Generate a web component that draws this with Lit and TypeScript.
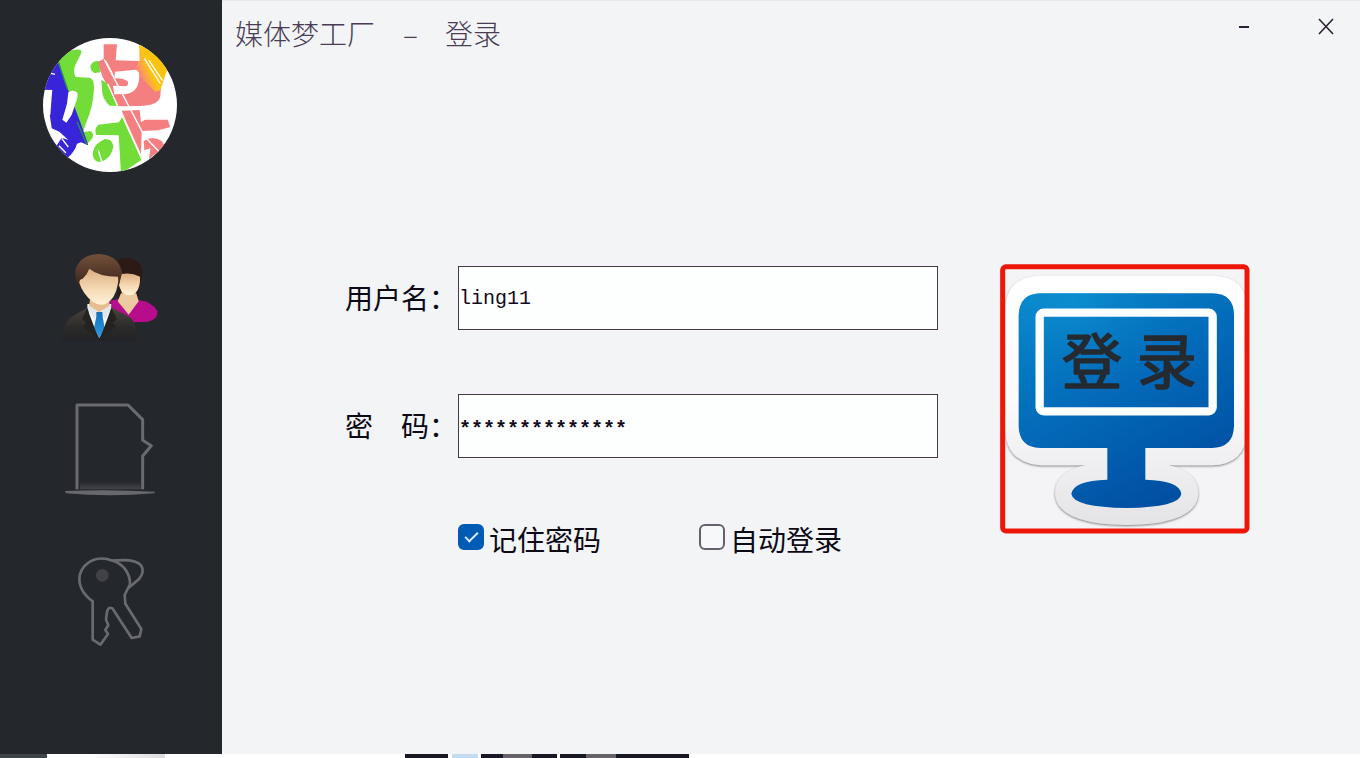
import { LitElement, html, css } from "lit";
import { customElement, state } from "lit/decorators.js";

@customElement("login-sidebar")
class LoginSidebar extends LitElement {
  static styles = css`
    :host {
      display: flex;
      flex-direction: column;
      align-items: center;
      gap: 68px;
      box-sizing: border-box;
      padding: 38px 3px 0 0;
      background: #24272c;
    }
    svg { display: block; }
    .avatar { width: 134px; height: 134px; }
    .nav { display: flex; flex-direction: column; gap: 30px; }
    .item {
      padding: 0;
      border: 0;
      background: none;
      cursor: pointer;
    }
    .icon { width: 120px; height: 120px; }
  `;

  render() {
    return html`
      <svg class="avatar" viewBox="36 39 402 402" role="img" aria-label="媒体梦工厂">
        <defs>
          <clipPath id="disc"><circle cx="237" cy="240" r="201" /></clipPath>
          <linearGradient id="sun" x1="1" y1="0" x2="0.1" y2="0.6">
            <stop offset="0" stop-color="#f6c400" />
            <stop offset="0.7" stop-color="#fdc414" />
            <stop offset="1" stop-color="#f88878" />
          </linearGradient>
        </defs>
        <circle cx="237" cy="240" r="201" fill="#fff" />
        <g clip-path="url(#disc)">
          <path fill="#72dc38" d="M82 105 Q110 70 146 74 Q154 76 150 86 L132 122 Q126 140 134 156 L176 158 Q190 162 189 190 Q187 245 166 292 L156 322 L178 318 Q190 324 184 340 Q176 352 164 358 L140 300 L110 225 L84 150Z" />
          <path fill="#3925d9" d="M30 195 L62 125 L84 112 L98 160 L148 292 L172 361 L150 352 L138 356 Q132 380 108 400 L74 366 L92 338 L112 345 L85 320 L62 310 L56 268 L62 195Z" />
          <path fill="#fff" d="M112 202 Q126 192 138 202 Q142 208 138 222 L122 270 L106 293 L94 284 L108 236Z" />
          <path fill="#fff" d="M44 194 L64 195 L62 215 L58 270 L40 262Z" />
          <path fill="none" stroke="#fff" stroke-width="4" d="M84 362 L105 384 M92 340 L112 366 M60 145 L72 148" />
          <path fill="none" stroke="#2b8b59" stroke-width="4" d="M82 112 L110 194 M138 290 L168 360" />
          <path fill="#f37f80" d="M218 58 L258 58 L254 106 L322 108 L390 184 L388 214 Q384 242 324 243 L262 244 L216 158 L198 112 L218 102Z" />
          <path fill="url(#sun)" d="M324 58 L360 70 L404 112 L408 136 L388 196 L372 200 L336 164 L314 128 L326 104Z" />
          <path fill="#fff" d="M252 140 L314 134 Q328 136 324 166 Q318 204 284 207 L250 208 L246 182 L284 184 Q294 182 290 169 Q274 157 250 160Z" />
          <path fill="none" stroke="#fff" stroke-width="4" d="M340 100 L388 176 M354 106 L394 166 M224 108 L246 150" />
          <path fill="#72dc38" d="M178 124 Q184 107 202 108 L208 142 L190 144 Q180 140 178 124Z M211 164 L230 176 L258 243 L236 242 Q213 222 213 193Z" />
          <path fill="#72dc38" d="M202 299 L264 292 L276 272 L332 404 L270 446 L263 331 L196 330 Q188 312 202 299Z" />
          <path fill="#72dc38" d="M222 342 Q244 342 247 364 Q240 405 204 411 Q184 407 185 384 Q190 354 222 342Z" />
          <path fill="#f37f80" d="M272 257 L326 255 L330 292 L342 284 L410 284 L418 306 L382 316 L332 318 L330 388 L286 290Z M338 348 Q364 330 392 348 L402 364 L354 402 L358 370 L340 376Z" />
          <path fill="none" stroke="#fff" stroke-width="4" d="M230 176 L336 410 M220 104 L346 344 M346 340 L386 382 M202 376 L212 408" />
        </g>
      </svg>
      <nav class="nav">
        <button class="item" aria-label="用户">
          <svg class="icon" viewBox="0 0 360 360" aria-hidden="true">
            <defs>
              <linearGradient id="skin" x1="0" y1="0" x2="0" y2="1">
                <stop offset="0" stop-color="#dcae80" />
                <stop offset="0.6" stop-color="#f6dcb8" />
                <stop offset="1" stop-color="#fff0d8" />
              </linearGradient>
              <linearGradient id="hair" x1="0" y1="0" x2="0" y2="1">
                <stop offset="0" stop-color="#73503b" />
                <stop offset="1" stop-color="#3b241a" />
              </linearGradient>
              <linearGradient id="suit" x1="0" y1="0" x2="0" y2="1">
                <stop offset="0" stop-color="#49443f" />
                <stop offset="0.6" stop-color="#2c2a29" />
                <stop offset="1" stop-color="#222327" />
              </linearGradient>
              <linearGradient id="tie" x1="0" y1="0" x2="0" y2="1">
                <stop offset="0" stop-color="#156fb8" />
                <stop offset="1" stop-color="#2f9ce8" />
              </linearGradient>
            </defs>
            <path fill="#2c1a17" d="M202 60 Q250 42 274 78 Q282 104 268 140 L264 178 L204 178Z" />
            <path fill="#b70d8d" d="M180 182 L210 176 L264 180 Q308 184 322 214 Q325 238 294 245 L200 248Z" />
            <path fill="#edcaa0" d="M213 160 L259 160 L266 184 L236 224 L203 184Z" />
            <path fill="url(#skin)" d="M214 102 Q244 96 270 110 Q272 142 256 160 Q240 172 216 158 L206 134Z" />
            <path fill="url(#suit)" d="M34 302 Q36 242 76 224 L114 202 L183 202 L230 226 Q264 240 260 302Z" />
            <path fill="#f4f8fa" d="M112 192 L184 192 L180 228 L148 294 L120 242Z" />
            <path fill="#e8bd8f" d="M120 178 L177 178 L180 199 L148 218 L117 199Z" />
            <path fill="#e0e8ed" d="M113 194 L147 216 L132 238 L112 204Z M183 194 L148 216 L166 238 L184 204Z" />
            <path fill="url(#tie)" d="M139 216 L157 216 L158 230 L164 264 L148 295 L132 264 L139 230Z" />
            <path fill="#25231f" d="M111 204 L146 296 L100 262 L108 246 L96 238Z M184 204 L150 296 L198 260 L188 248 L201 238Z" />
            <path fill="url(#hair)" d="M88 140 Q70 110 78 84 Q94 44 148 42 Q207 46 216 98 L206 140 L100 140Z" />
            <path fill="url(#skin)" d="M118 86 Q147 110 204 110 Q206 122 203 134 Q196 178 166 192 Q147 198 129 186 Q98 162 88 128 Q88 118 98 116 Q112 104 118 86Z" />
          </svg>
        </button>
        <button class="item" aria-label="文件">
          <svg class="icon" viewBox="0 0 360 360" aria-hidden="true">
            <defs>
              <linearGradient id="floor" x1="0" y1="0" x2="0" y2="1">
                <stop offset="0" stop-color="#24272c" />
                <stop offset="1" stop-color="#43454a" />
              </linearGradient>
            </defs>
            <path fill="url(#floor)" d="M90 275 H272 V298 H90Z" />
            <path fill="none" stroke="#696b71" stroke-width="9" stroke-linejoin="round" d="M81 298 V45 H234 L278 89 V151 L304 167 L278 198 V298" />
            <path fill="#66686d" d="M44 303 Q180 297 316 305 L312 310 Q180 322 48 310Z" />
          </svg>
        </button>
        <button class="item" aria-label="密钥">
          <svg class="icon" viewBox="-30 -15 360 360" aria-hidden="true">
            <circle cx="127" cy="91" r="19" fill="#404247" />
            <g fill="none" stroke="#696b71" stroke-width="8" stroke-linejoin="round" stroke-linecap="round">
              <path d="M98 169 C54 138 48 94 72 65 C94 40 126 35 158 47 C190 56 211 86 210 118 L194 150 L196 176 L244 252 L239 274 L215 279 L157 190 Q145 184 141 200 L138 224 L145 240 L136 255 L144 267 L121 299 L98 284Z" />
              <path d="M158 47 Q227 40 243 61 Q255 79 238 101 L208 127" />
            </g>
          </svg>
        </button>
      </nav>
    `;
  }
}

@customElement("app-root")
class AppRoot extends LitElement {
  static styles = css`
    :host {
      display: grid;
      grid-template-columns: 222px 1fr;
      grid-template-rows: 1fr 4px;
      height: 100vh;
      overflow: hidden;
      background: #fff;
      color: #0d0915;
      font-family: "Noto Sans CJK SC", sans-serif;
      font-size: 28px;
      line-height: 40px;
    }
    .window {
      display: flex;
      flex-direction: column;
      gap: 204px;
      background: #f3f4f6;
      border-top: 1px solid #e5ebec;
    }
    .bar {
      display: flex;
      justify-content: space-between;
      align-items: flex-start;
      height: 59px;
      padding: 0 14px 0 13px;
    }
    .title {
      display: flex;
      gap: 28px;
      margin: 0;
      padding-top: 12px;
      font-size: 28px;
      font-weight: 300;
      color: #493d55;
    }
    .dash { width: 14px; text-align: center; }
    .controls { display: flex; gap: 42px; padding-top: 6px; }
    .control {
      width: 40px;
      height: 40px;
      padding: 0;
      border: 0;
      background: none;
      cursor: pointer;
    }
    .glyph { display: block; width: 40px; height: 40px; }
    .content {
      display: flex;
      align-items: flex-start;
      gap: 62px;
      padding: 0 110px 0 123px;
    }
    .form {
      flex: 1;
      display: flex;
      flex-direction: column;
      gap: 64px;
      padding-top: 2px;
    }
    .row { display: flex; align-items: center; }
    .caption { width: 113px; padding-bottom: 2px; white-space: nowrap; }
    .field {
      flex: 1;
      min-width: 0;
      box-sizing: border-box;
      height: 64px;
      padding: 0;
      border: 1px solid #45384b;
      border-radius: 0;
      outline: none;
      background: #fdfefe;
      color: #130b1c;
      font: 20px "Liberation Mono", monospace;
    }
    .secret { padding-top: 6px; font-weight: bold; }
    .options { display: flex; gap: 98px; padding-left: 113px; }
    .option {
      display: flex;
      align-items: center;
      gap: 5px;
      line-height: 34px;
      white-space: nowrap;
    }
    .box {
      appearance: none;
      display: grid;
      place-items: center;
      box-sizing: border-box;
      width: 26px;
      height: 26px;
      margin: 0 0 4px;
      border: 2px solid #66606c;
      border-radius: 6px;
      background: #f7f8f9;
    }
    .box:checked { border-color: #005bb5; background: #005bb5; }
    .box:checked::before {
      content: "";
      width: 11px;
      height: 5px;
      margin-bottom: 4px;
      border: solid #dcecff;
      border-width: 0 0 2px 2px;
      transform: rotate(-45deg);
    }
    .login {
      width: 250px;
      height: 270px;
      padding: 0;
      border: 0;
      background: none;
      cursor: pointer;
    }
    .monitor { display: block; width: 250px; height: 270px; }
    .word {
      font-family: "Noto Sans CJK SC", sans-serif;
      font-size: 180px;
      font-weight: 400;
      fill: #242a30;
      stroke: #242a30;
      stroke-width: 5px;
      stroke-linejoin: round;
    }
    .desktop {
      grid-column: 1 / -1;
      background: linear-gradient(
        90deg,
        #3d454b 0 47px,
        #fff 47px 90px,
        #dcdcdc 165px,
        #fff 165px 405px,
        #1a1724 405px 448px,
        #fff 448px 452px,
        #c3dcef 452px 478px,
        #fff 478px 481px,
        #1a1724 481px 503px,
        #67626a 503px 532px,
        #1a1724 532px 557px,
        #fff 557px 560px,
        #1a1724 560px 586px,
        #67626a 586px 616px,
        #1a1724 616px 689px,
        #fff 689px
      );
    }
  `;

  @state() private user = "ling11";
  @state() private mask = "*".repeat(14);

  render() {
    return html`
      <login-sidebar></login-sidebar>
      <main class="window">
        <header class="bar">
          <h1 class="title"><span>媒体梦工厂</span><span class="dash">–</span><span>登录</span></h1>
          <div class="controls">
            <button class="control" aria-label="最小化">
              <svg class="glyph" viewBox="0 0 40 40"><path d="M15 20 H25" stroke="#2b2234" stroke-width="2" /></svg>
            </button>
            <button class="control" aria-label="关闭">
              <svg class="glyph" viewBox="0 0 40 40"><path d="M13 12 L27 27 M27 12 L13 27" stroke="#2b2234" stroke-width="1.6" /></svg>
            </button>
          </div>
        </header>
        <div class="content">
          <form class="form" id="login" @submit=${(e: Event) => e.preventDefault()}>
            <div class="row">
              <label class="caption" for="user">用户名：</label>
              <input class="field" id="user" type="text" autocomplete="off" spellcheck="false" .value=${this.user} />
            </div>
            <div class="row">
              <label class="caption" for="secret">密　码：</label>
              <input class="field secret" id="secret" type="text" autocomplete="off" spellcheck="false" .value=${this.mask} />
            </div>
            <div class="options">
              <label class="option"><input class="box" type="checkbox" checked />记住密码</label>
              <label class="option"><input class="box" type="checkbox" />自动登录</label>
            </div>
          </form>
          <button class="login" type="submit" form="login">
            <svg class="monitor" viewBox="30 27 750 810">
              <defs>
                <linearGradient id="blue" x1="0.1" y1="0" x2="0.65" y2="1">
                  <stop offset="0" stop-color="#0786cb" />
                  <stop offset="0.5" stop-color="#0369b8" />
                  <stop offset="1" stop-color="#014ea2" />
                </linearGradient>
                <radialGradient id="glow" cx="0.25" cy="0.05" r="0.6">
                  <stop offset="0" stop-color="#14a0dc" />
                  <stop offset="1" stop-color="#0870bd" stop-opacity="0" />
                </radialGradient>
                <linearGradient id="paper" x1="0" y1="0" x2="0" y2="1">
                  <stop offset="0" stop-color="#ffffff" />
                  <stop offset="0.5" stop-color="#fbfbfc" />
                  <stop offset="1" stop-color="#e4e4e7" />
                </linearGradient>
                <filter id="shade" x="-10%" y="-10%" width="120%" height="120%">
                  <feDropShadow dx="0" dy="3" stdDeviation="3" flood-color="#55555b" flood-opacity="0.75" />
                </filter>
                <clipPath id="inside"><rect x="40" y="36" width="730" height="790" /></clipPath>
              </defs>
              <rect x="38" y="35" width="733" height="793" fill="#f4f4f7" />
              <g clip-path="url(#inside)">
                <path fill="url(#paper)" filter="url(#shade)" d="M150 62 H670 Q772 64 772 166 V530 Q765 628 666 631 H535 Q626 650 625 718 Q618 808 410 810 Q202 808 195 718 Q194 650 286 631 H150 Q52 622 46 530 V166 Q46 66 150 62Z" />
              </g>
              <path fill="url(#blue)" d="M150 115 H668 Q732 117 732 180 V514 Q730 578 666 579 H466 V674 Q570 677 574 717 Q568 757 410 759 Q251 757 244 717 Q249 677 352 674 V579 H150 Q87 577 86 514 V180 Q88 117 150 115Z" />
              <rect x="86" y="115" width="646" height="464" rx="66" fill="url(#glow)" opacity="0.4" />
              <rect x="149" y="173" width="519" height="296" rx="12" fill="none" stroke="#fbfdff" stroke-width="25" />
              <text class="word" x="216 440" y="387">登录</text>
              <rect x="38" y="35" width="733" height="793" rx="10" fill="none" stroke="#ed1608" stroke-width="15" />
            </svg>
          </button>
        </div>
      </main>
      <div class="desktop"></div>
    `;
  }
}
